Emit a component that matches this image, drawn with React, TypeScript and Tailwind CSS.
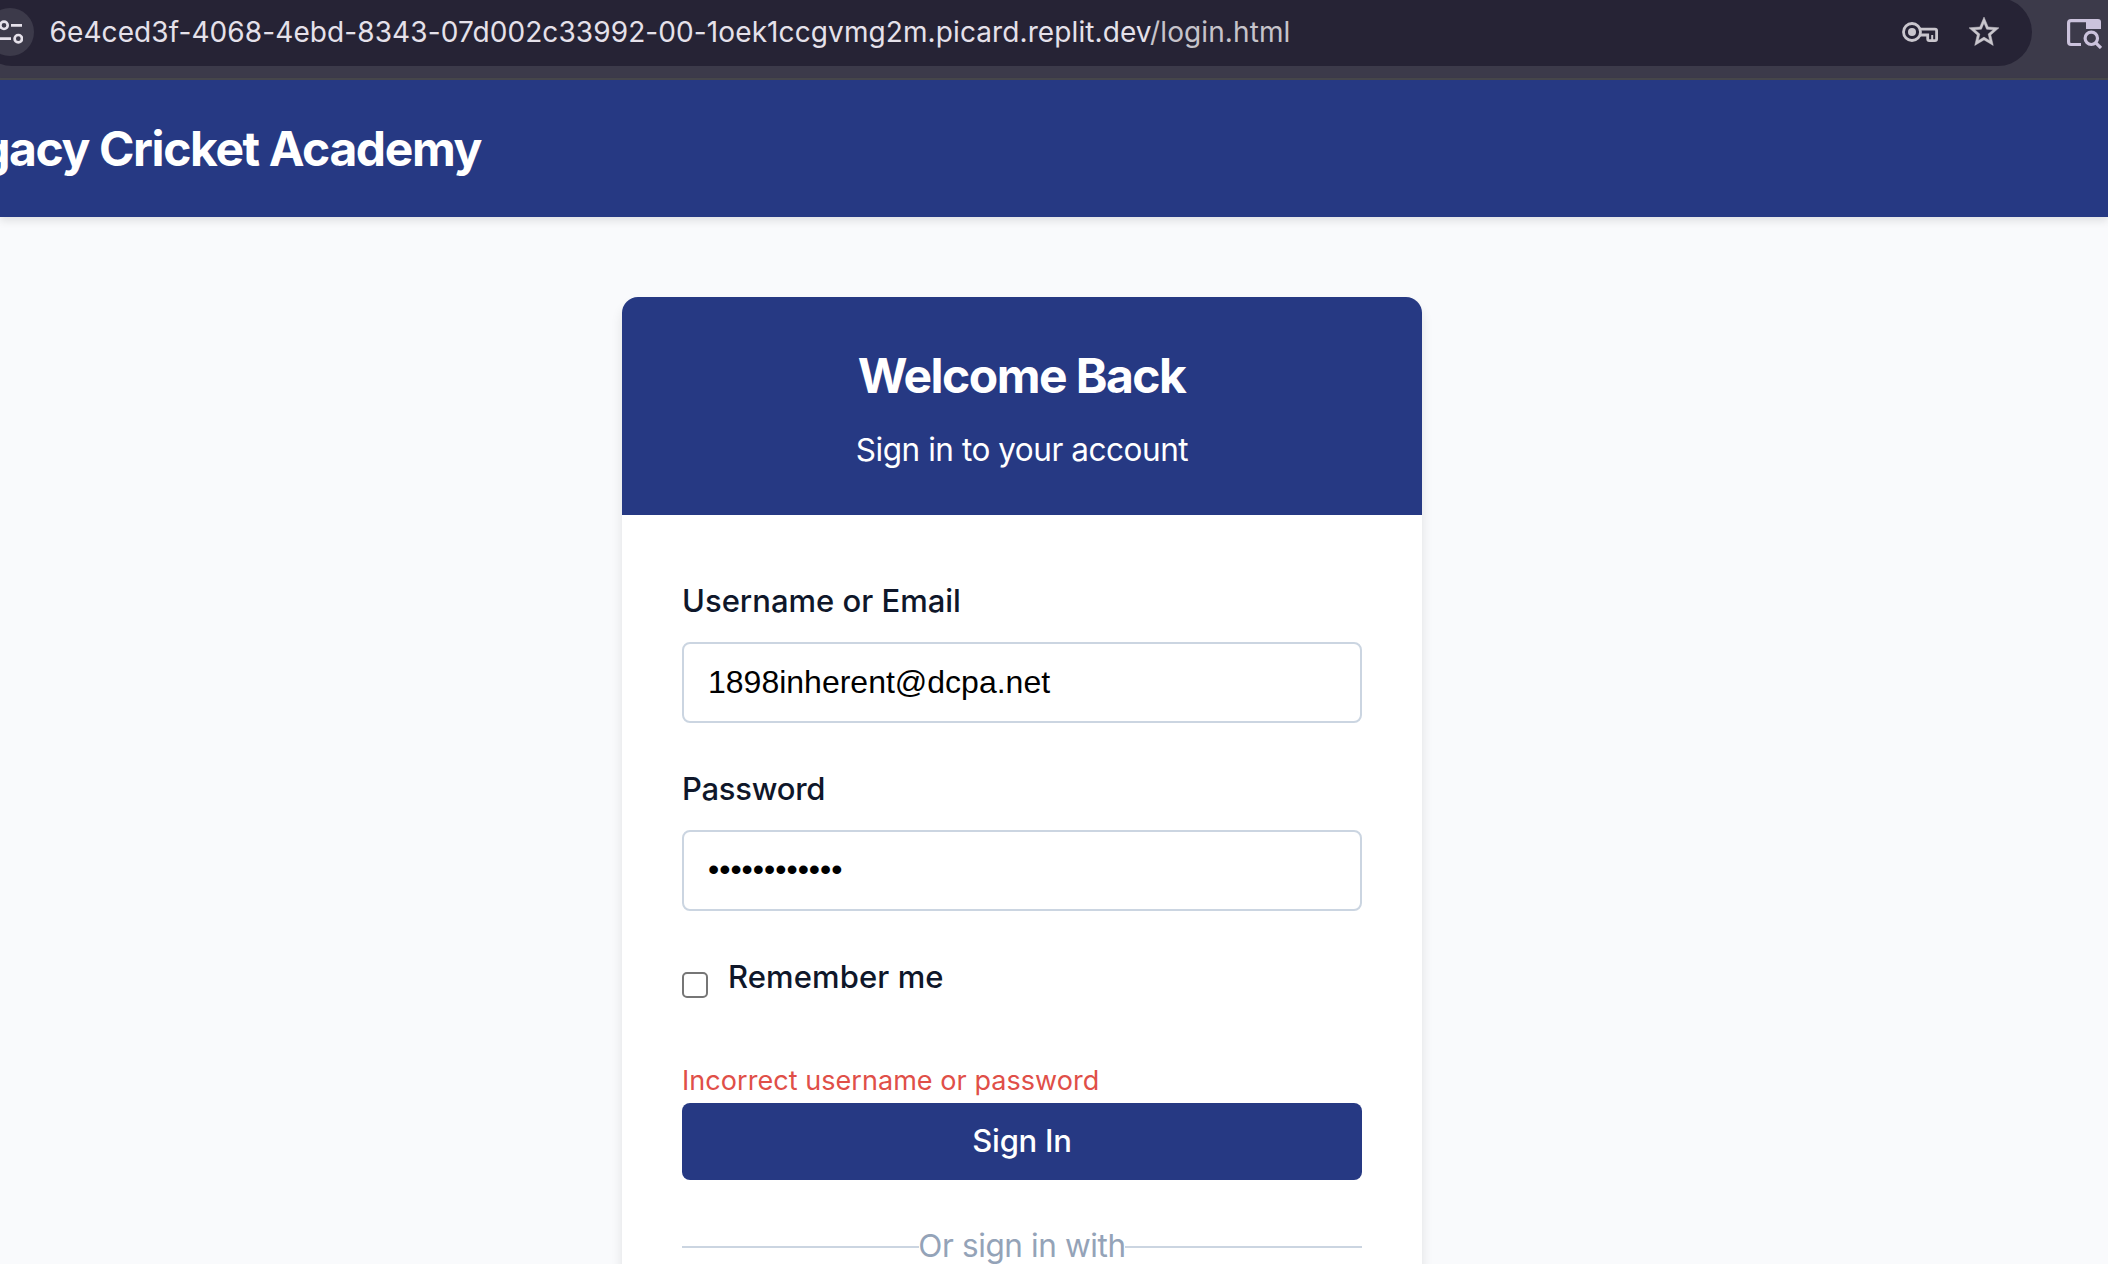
function TuneIcon() {
  return (
    <svg width="26" height="24" viewBox="0 0 26 24" fill="none" stroke="#e5e1ea" strokeWidth="2.7">
      <circle cx="7" cy="5.3" r="3.7" />
      <path d="M14 5.4H25M1 18.7H14" />
      <circle cx="21.3" cy="18.7" r="3.7" />
    </svg>
  );
}

function KeyIcon() {
  return (
    <svg width="36" height="20" viewBox="0 0 36 20" fill="none" stroke="#c9c6cd" strokeWidth="2.8">
      <circle cx="10" cy="10" r="8.5" />
      <circle cx="10" cy="10" r="4" fill="#c9c6cd" stroke="none" />
      <path d="M18 7.2H33Q34.6 7.2 34.6 8.8V17Q34.6 18.6 33 18.6H27.3Q25.7 18.6 25.7 17V13H18" />
      <path d="M30.2 13V18" strokeWidth="2" />
    </svg>
  );
}

function StarIcon() {
  return (
    <svg width="36" height="36" viewBox="0 0 24 24" fill="#c9c6cd" stroke="#c9c6cd" strokeWidth="0.3">
      <path d="M22 9.24l-7.19-.62L12 2 9.19 8.63 2 9.24l5.46 4.73L5.82 21 12 17.27 18.18 21l-1.63-7.03L22 9.24zM12 15.4l-3.76 2.27 1-4.28-3.32-2.88 4.38-.38L12 6.1l1.71 4.04 4.38.38-3.32 2.88 1 4.28L12 15.4z" />
    </svg>
  );
}

function TabSearchIcon() {
  return (
    <svg width="35" height="30" viewBox="0 0 35 30" fill="none" stroke="#cbc2dc" strokeWidth="3.2">
      <path d="M14 25.5H4Q1.6 25.5 1.6 23V4Q1.6 1.6 4 1.6H30" />
      <path d="M19 0H31Q34 0 34 3V10H19Z" fill="#cbc2dc" stroke="none" />
      <circle cx="24.3" cy="19.3" r="6.2" />
      <path d="M28.8 23.8L34 29" />
    </svg>
  );
}

function BrowserBar() {
  return (
    <div className="flex h-20 items-start justify-between border-b-2 border-[#47474b] bg-[#3c3a4a]">
      <div className="-mt-0.5 -ml-[22px] flex h-[68px] w-[2054px] shrink-0 items-center rounded-full bg-[#262335]">
        <div className="ml-2 flex size-12 shrink-0 items-center justify-center rounded-full bg-[#3c3a4a]">
          <TuneIcon />
        </div>
        <div className="ml-[15.5px] flex-1 text-[28px] leading-[44px] tracking-[0.1px] whitespace-nowrap text-[#e5e1ea]">
          6e4ced3f-4068-4ebd-8343-07d002c33992-00-1oek1ccgvmg2m.picard.replit.dev
          <span className="text-[#c6c3ca]">/login.html</span>
        </div>
        <div className="mr-[30px] flex items-center gap-7">
          <KeyIcon />
          <StarIcon />
        </div>
      </div>
      <div className="mt-[19px] mr-1.5">
        <TabSearchIcon />
      </div>
    </div>
  );
}

const labelClass = "relative top-px block text-[31px] leading-[50px] font-medium whitespace-nowrap text-[#0f172a]";
const inputClass =
  "mt-[17px] block h-[81px] w-full rounded-lg border-2 border-[#cbd5e1] bg-white px-6 font-['Liberation_Sans',Arial,sans-serif] text-[32px] text-black outline-none";

export default function App() {
  return (
    <div className="h-[1264px] w-full overflow-hidden bg-[#f9fafc] font-[Inter,sans-serif]">
      <BrowserBar />
      <header className="relative flex h-[137px] items-center bg-[#263983] shadow-[0_4px_8px_rgba(0,0,0,0.1)]">
        <div className="flex w-[481px] justify-end">
          <h1 className="text-[48px] leading-[58px] font-bold tracking-[-1.4px] whitespace-nowrap text-white">
            Legacy Cricket Academy
          </h1>
        </div>
      </header>

      <main className="mt-20 ml-[622px] w-[800px] rounded-2xl bg-white shadow-[0_8px_12px_rgba(0,0,0,0.1)]">
        <div className="h-[218px] rounded-t-2xl bg-[#263983] pt-[50px] text-center text-white">
          <h2 className="pr-px text-[48px] leading-[58px] font-bold tracking-[-1.55px]">Welcome Back</h2>
          <p className="mt-5 text-[31.5px] leading-[50px] tracking-[-0.46px]">Sign in to your account</p>
        </div>

        <form className="px-[60px] pt-[60px] pb-20">
          <label htmlFor="user" className={labelClass}>
            Username or Email
          </label>
          <input id="user" type="text" defaultValue="1898inherent@dcpa.net" className={inputClass} />

          <label htmlFor="pass" className={`mt-10 tracking-[-0.25px] ${labelClass}`}>
            Password
          </label>
          <input id="pass" type="password" defaultValue="abcdefghijkl" className={`pb-[3px] ${inputClass}`} />

          <div className="mt-10 flex h-[50px]">
            <input
              id="remember"
              type="checkbox"
              className="mt-[21px] size-[26px] appearance-none rounded-[5px] border-2 border-[#767676] bg-white"
            />
            <label htmlFor="remember" className={`ml-5 tracking-[0.1px] ${labelClass}`}>
              Remember me
            </label>
          </div>

          <p className="mt-[57px] text-[27px] leading-[45px] tracking-[0.05px] text-[#e04f48]">
            Incorrect username or password
          </p>
          <button
            type="button"
            className="block h-[77px] w-full rounded-lg bg-[#263983] text-[31px] font-medium tracking-[-0.234px] text-white"
          >
            Sign In
          </button>

          <div className="mt-[41px] flex items-center text-[31.5px] leading-[50px] tracking-[-0.4px] text-[#94a3b8]">
            <div className="mt-0.5 h-0.5 flex-1 bg-[#cbd5e1]" />
            <span className="-mx-px">Or sign in with</span>
            <div className="mt-0.5 h-0.5 flex-1 bg-[#cbd5e1]" />
          </div>
        </form>
      </main>
    </div>
  );
}
